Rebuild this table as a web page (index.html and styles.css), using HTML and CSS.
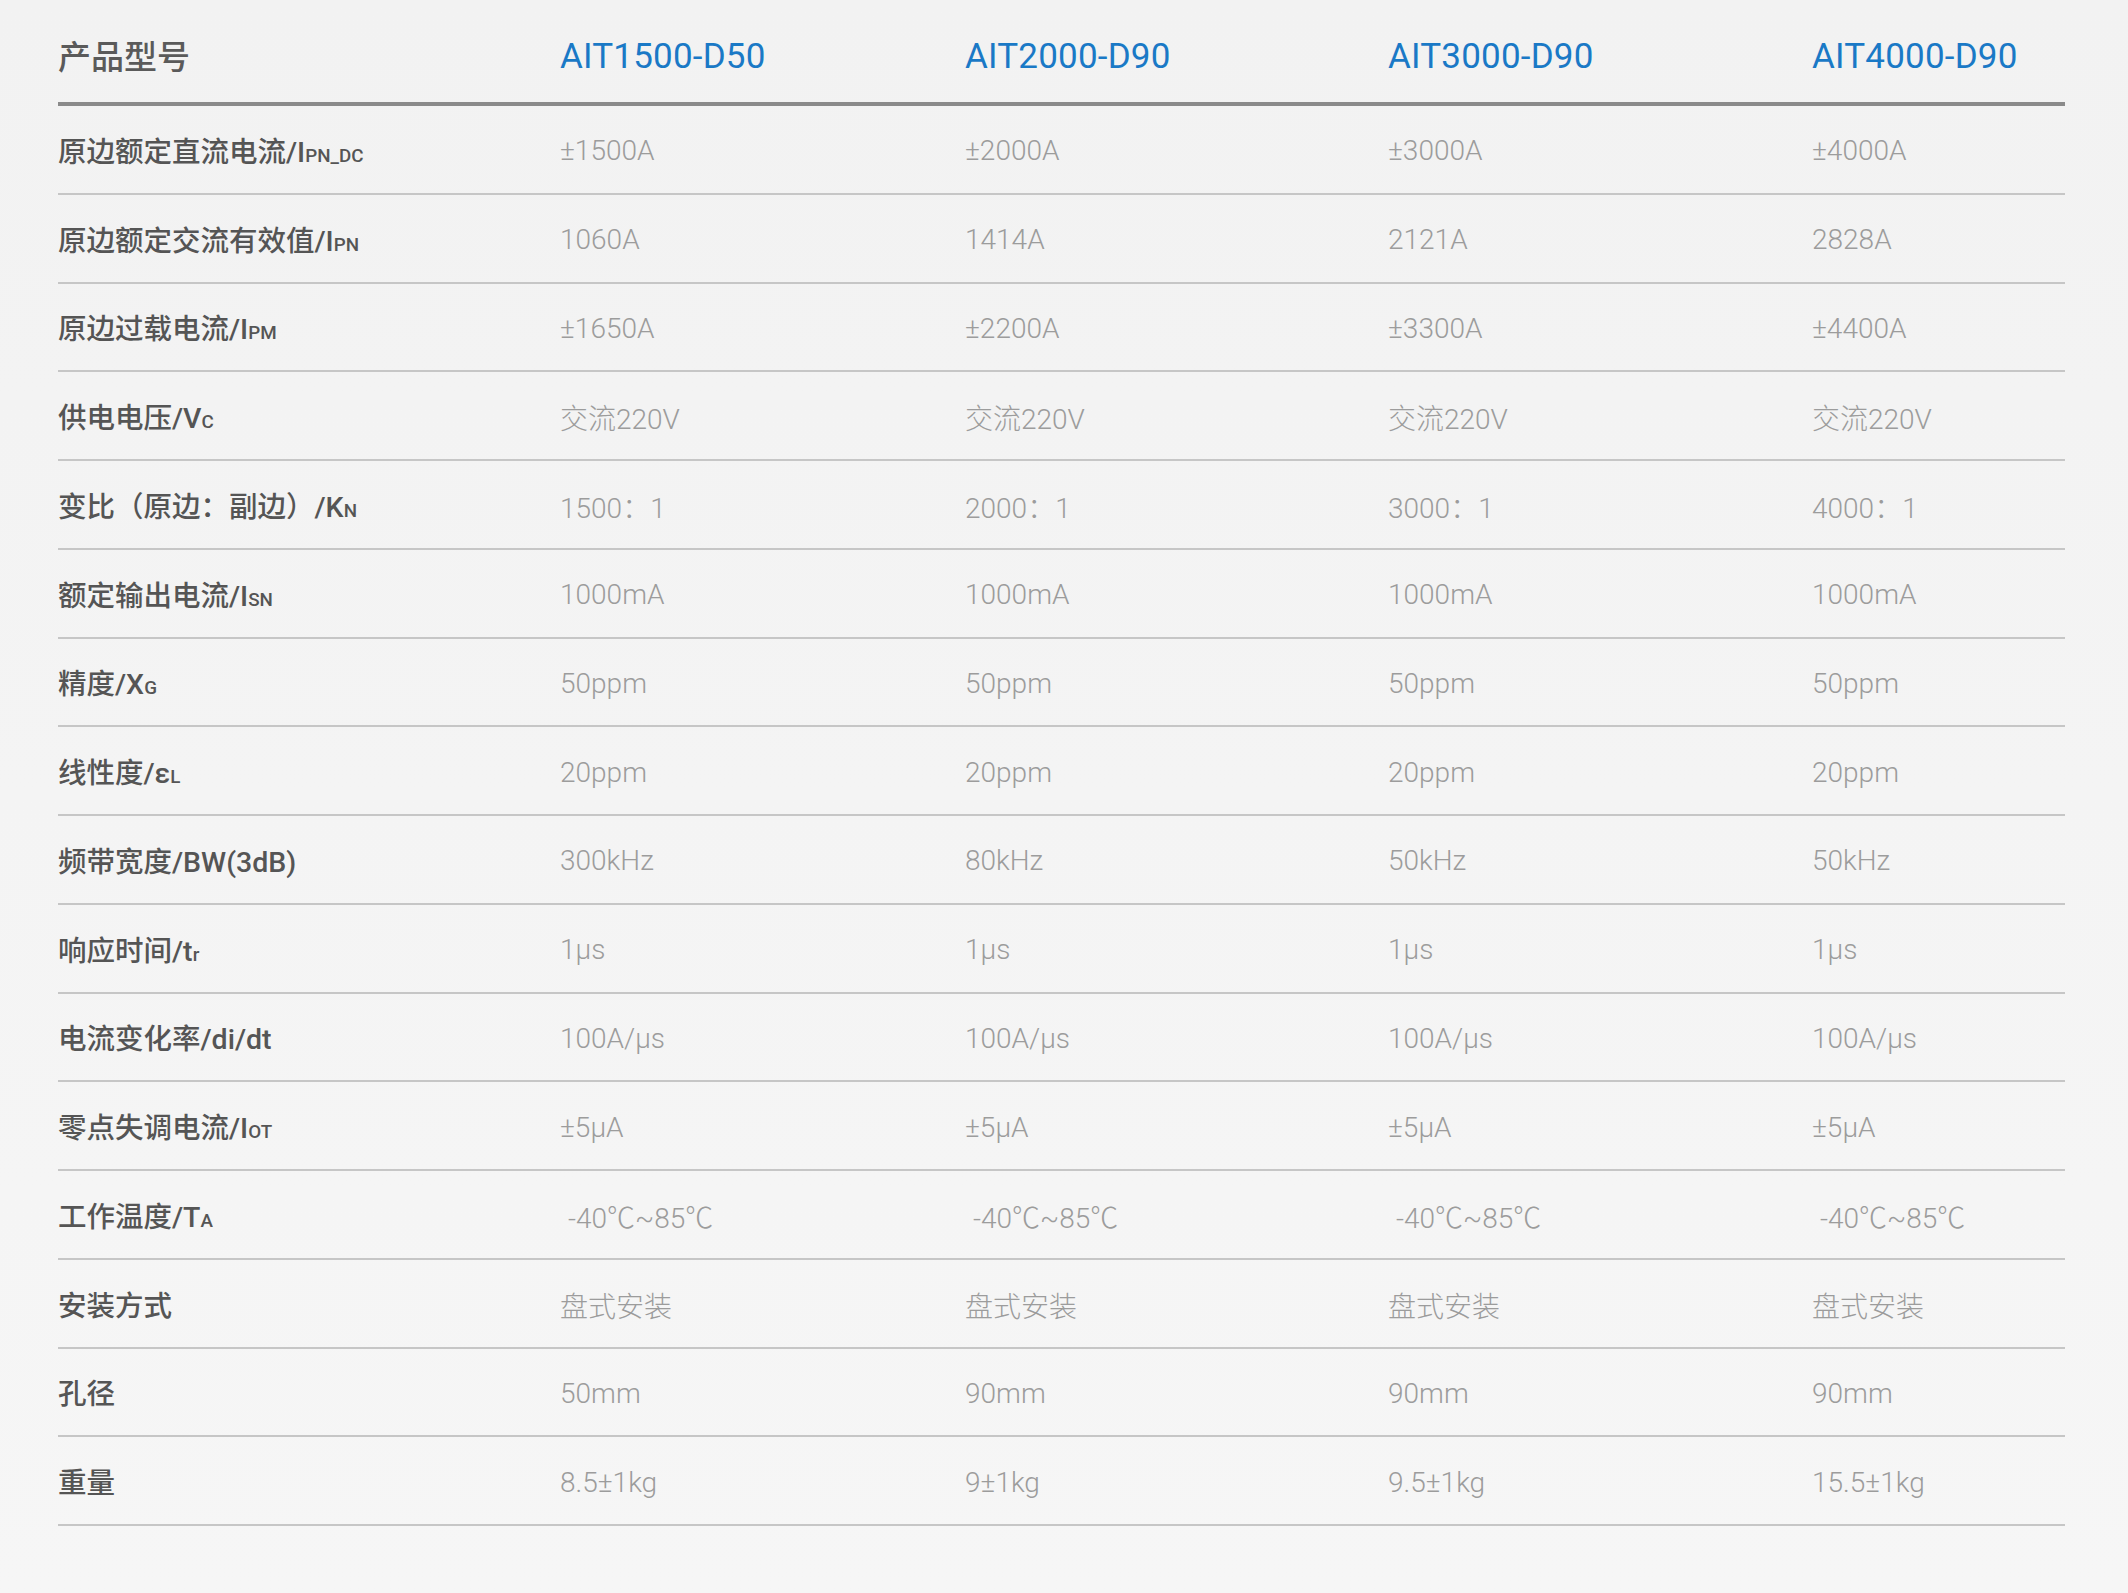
FILE: index.html
```html
<!DOCTYPE html>
<html lang="zh-CN">
<head>
<meta charset="utf-8">
<title>产品参数</title>
<link rel="stylesheet" href="styles.css">
</head>
<body>
<div class="spec">
  <div class="row head">
    <div class="label">产品型号</div>
    <div class="model">AIT1500-D50</div>
    <div class="model">AIT2000-D90</div>
    <div class="model">AIT3000-D90</div>
    <div class="model">AIT4000-D90</div>
  </div>
  <div class="row">
    <div class="label">原边额定直流电流/I<span class="sub">PN_DC</span></div>
    <div class="val">±1500A</div><div class="val">±2000A</div><div class="val">±3000A</div><div class="val">±4000A</div>
  </div>
  <div class="row">
    <div class="label">原边额定交流有效值/I<span class="sub">PN</span></div>
    <div class="val">1060A</div><div class="val">1414A</div><div class="val">2121A</div><div class="val">2828A</div>
  </div>
  <div class="row">
    <div class="label">原边过载电流/I<span class="sub">PM</span></div>
    <div class="val">±1650A</div><div class="val">±2200A</div><div class="val">±3300A</div><div class="val">±4400A</div>
  </div>
  <div class="row">
    <div class="label">供电电压/V<span class="sub">C</span></div>
    <div class="val">交流220V</div><div class="val">交流220V</div><div class="val">交流220V</div><div class="val">交流220V</div>
  </div>
  <div class="row">
    <div class="label">变比（原边：副边）/K<span class="sub">N</span></div>
    <div class="val">1500：1</div><div class="val">2000：1</div><div class="val">3000：1</div><div class="val">4000：1</div>
  </div>
  <div class="row">
    <div class="label">额定输出电流/I<span class="sub">SN</span></div>
    <div class="val">1000mA</div><div class="val">1000mA</div><div class="val">1000mA</div><div class="val">1000mA</div>
  </div>
  <div class="row">
    <div class="label">精度/X<span class="sub">G</span></div>
    <div class="val">50ppm</div><div class="val">50ppm</div><div class="val">50ppm</div><div class="val">50ppm</div>
  </div>
  <div class="row">
    <div class="label">线性度/ε<span class="sub">L</span></div>
    <div class="val">20ppm</div><div class="val">20ppm</div><div class="val">20ppm</div><div class="val">20ppm</div>
  </div>
  <div class="row">
    <div class="label">频带宽度/BW(3dB)</div>
    <div class="val">300kHz</div><div class="val">80kHz</div><div class="val">50kHz</div><div class="val">50kHz</div>
  </div>
  <div class="row">
    <div class="label">响应时间/t<span class="sub">r</span></div>
    <div class="val">1μs</div><div class="val">1μs</div><div class="val">1μs</div><div class="val">1μs</div>
  </div>
  <div class="row">
    <div class="label">电流变化率/di/dt</div>
    <div class="val">100A/μs</div><div class="val">100A/μs</div><div class="val">100A/μs</div><div class="val">100A/μs</div>
  </div>
  <div class="row">
    <div class="label">零点失调电流/I<span class="sub">OT</span></div>
    <div class="val">±5μA</div><div class="val">±5μA</div><div class="val">±5μA</div><div class="val">±5μA</div>
  </div>
  <div class="row">
    <div class="label">工作温度/T<span class="sub">A</span></div>
    <div class="val indent">-40℃~85℃</div><div class="val indent">-40℃~85℃</div><div class="val indent">-40℃~85℃</div><div class="val indent">-40℃~85℃</div>
  </div>
  <div class="row">
    <div class="label">安装方式</div>
    <div class="val">盘式安装</div><div class="val">盘式安装</div><div class="val">盘式安装</div><div class="val">盘式安装</div>
  </div>
  <div class="row">
    <div class="label">孔径</div>
    <div class="val">50mm</div><div class="val">90mm</div><div class="val">90mm</div><div class="val">90mm</div>
  </div>
  <div class="row">
    <div class="label">重量</div>
    <div class="val">8.5±1kg</div><div class="val">9±1kg</div><div class="val">9.5±1kg</div><div class="val">15.5±1kg</div>
  </div>
</div>
</body>
</html>
```
FILE: styles.css
```css
html, body {
  margin: 0;
  padding: 0;
}
body {
  background: linear-gradient(#f2f2f2, #f6f6f6);
  min-height: 1593px;
  font-family: Roboto, "Noto Sans CJK SC", sans-serif;
}
.spec {
  margin-left: 58px;
  width: 2007px;
}
.row {
  display: grid;
  grid-template-columns: 502px 405px 423px 424px 1fr;
  align-items: center;
  height: 86.75px;
  border-bottom: 2px solid #c6c6c6;
}
.row.head {
  height: 102px;
  border-bottom: 4px solid #8a8a8a;
}
.label {
  font-size: 28.5px;
  font-weight: 500;
  color: #555;
  white-space: nowrap;
}
.head .label {
  font-size: 33px;
  font-weight: 500;
  color: #5a5a5a;
  padding-top: 8px;
}
.sub {
  font-size: 0.66em;
}
.model {
  font-size: 35px;
  font-weight: 400;
  color: #1a79c6;
  letter-spacing: 0.2px;
  padding-top: 11px;
}
.val {
  font-size: 28px;
  font-weight: 300;
  color: #9c9c9c;
  white-space: nowrap;
  padding-top: 3px;
}
.val.indent {
  padding-left: 8px;
}
```
